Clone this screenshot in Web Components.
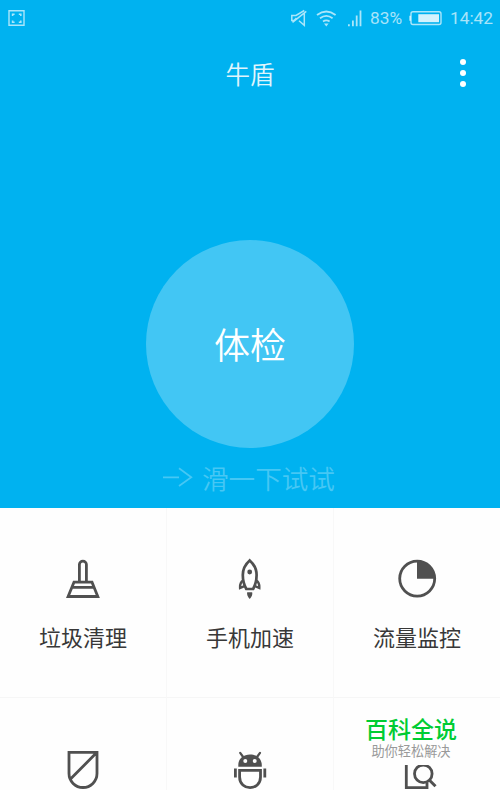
<!DOCTYPE html>
<html lang="zh-CN">
<head>
<meta charset="utf-8">
<title>牛盾</title>
<style>
html,body{margin:0;height:100%;overflow:hidden;background:#fefefe}
body{font-family:"Noto Sans CJK SC",sans-serif}
</style>
</head>
<body>
<shield-app></shield-app>
<script>
function define(name, html){
  const t=document.createElement('template');
  t.innerHTML=html;
  customElements.define(name,class extends HTMLElement{
    constructor(){super();this.attachShadow({mode:'open'}).append(t.content.cloneNode(true));}
  });
}

define('status-bar',`
<style>
:host{display:flex;align-items:center;height:35px;box-sizing:border-box;padding:0 8px 0 8px;color:rgba(255,255,255,.67);font:17.3px/36px Roboto,sans-serif}
svg{display:block;flex:none}
.gap{flex:1}
.pct{width:31px;white-space:nowrap;margin-right:8px}
.time{width:42px;white-space:nowrap}
</style>
<svg width="18" height="18" viewBox="8 8 18 18" fill="none" stroke="currentColor" stroke-width="1.4"><path d="M9 9.7H24V24.3H9Z"/><path stroke-width="1.6" d="M12.6 15V13.2H14.6M18.8 13.2H20.8V15M20.8 19.4V21.2H18.8M14.6 21.2H12.6V19.4"/></svg>
<span class="gap"></span>
<svg width="80" height="24" viewBox="290 5 80 24" fill="none" stroke="currentColor" stroke-width="1.5"><path d="M304.3 12V24.3L299 19.8M296.5 17L294 19.6H291.8V14.4H296L304.3 9.5M292.5 21.3L306.3 10.3"/>
<path stroke-width="1.8" d="M317 14Q326.3 7 335.6 14M320 17.3Q326.3 12.6 332.6 17.3M323 20.5Q326.3 18.2 329.6 20.5"/><path fill="currentColor" stroke="none" d="M324 22.6H328.6L326.3 25.4Z"/>
<path stroke-width="1.8" d="M348.9 23.3V25.2M352.9 19.6V25.2M356.7 14.5V25.2M360.5 9.4V25.2"/></svg>
<span class="pct">83%</span>
<svg width="41" height="24" viewBox="409 5 41 24"><rect x="411" y="10.7" width="30" height="12.8" rx="2" fill="none" stroke="currentColor" stroke-width="1.4"/><path d="M409.3 14.7H411V19.7H409.3Z" fill="currentColor"/><path d="M418.3 13.2H439V21.2H418.3Z" fill="#fff" opacity=".83"/></svg>
<span class="time">14:42</span>`);

define('title-bar',`
<style>
:host{display:grid;grid-template-columns:1fr auto 1fr;align-items:center;height:77px;color:#fff}
.t{grid-column:2;font-size:24.5px;font-weight:350;line-height:36px;opacity:.88}
.m{justify-self:end;margin-right:34px;display:grid;gap:5.2px;padding-bottom:1px}
i{display:block;width:6px;height:6px;border-radius:50%;background:#fff}
</style>
<span class="t"><slot></slot></span><span class="m"><i></i><i></i><i></i></span>`);

define('scan-button',`
<style>
:host{display:flex;align-items:center;justify-content:center;width:208px;height:208px;box-sizing:border-box;padding-bottom:2px;border-radius:50%;background:#42c6f4;color:#fff;font-size:36px;font-weight:350;line-height:52px}
</style><slot></slot>`);

define('swipe-hint',`
<style>
:host{display:flex;align-items:center;color:#46c7f4;font-size:26.6px;font-weight:350;line-height:38px}
svg{margin-right:9px}
</style>
<svg width="31" height="22" viewBox="162 467 31 22" fill="none" stroke="currentColor" stroke-width="1.7"><path d="M163 477.3H179M179 468.3L191.3 477.3L179 486"/></svg><slot></slot>`);

define('feature-tile',`
<style>
:host{display:flex;flex-direction:column;align-items:center;box-sizing:border-box;height:190px;padding-top:48px;border-right:1px solid #f8f8f8;border-bottom:1px solid #f6f6f6;color:#383838;font-size:22px;line-height:32px}
:host([last]){border-right:0}
::slotted(svg){display:block;width:44px;height:46px;margin-bottom:18px;fill:none;stroke:#505050;stroke-width:2.8;overflow:hidden}
</style>
<slot name="icon"></slot><span><slot></slot></span>`);

define('brand-mark',`
<style>
:host{display:flex;flex-direction:column;align-items:center;background:#fefefe;width:140px;height:65px;box-sizing:border-box;padding-top:11px}
b{color:#0c3;font-size:23px;line-height:34px;font-weight:500;height:34px;margin-bottom:-4px}
span{color:#999;font-size:13.2px;line-height:20px}
</style>
<b><slot></slot></b><span><slot name="sub"></slot></span>`);

define('shield-app',`
<style>
:host{display:block;width:500px;height:790px;overflow:hidden;position:relative;background:#fefefe}
header{background:#00b2f0;height:508px;display:flex;flex-direction:column}
scan-button{align-self:center;margin-top:128px}
swipe-hint{margin:11px 0 0 162px}
main{display:grid;grid-template-columns:167px 167px 166px}
brand-mark{position:absolute;left:341px;top:700px}
.solid{fill:#505050;stroke:none}
</style>
<header>
<status-bar></status-bar>
<title-bar>牛盾</title-bar>
<scan-button>体检</scan-button>
<swipe-hint>滑一下试试</swipe-hint>
</header>
<main>
<feature-tile><svg slot="icon" viewBox="61 556 44 46"><path d="M79.4 581V564.6A3.5 3.5 0 0 1 86.4 564.6V581M74 582.2H92L97.8 596.5H68.1ZM72.4 587.3H93.6"/></svg>垃圾清理</feature-tile>
<feature-tile><svg slot="icon" viewBox="228 556 44 46"><path stroke-width="2.7" d="M249.7 560.4C245 564.5 242.8 569.5 242.8 575C242.8 580.5 244.4 585.5 246.3 589H253.1C255 585.5 256.6 580.5 256.6 575C256.6 569.5 254.4 564.5 249.7 560.4Z"/><path stroke-width="2.4" d="M243 580.5Q239.8 582.5 240.1 588L245 585.8M256.4 580.5Q259.6 582.5 259.3 588L254.4 585.8"/><circle class="solid" cx="249.7" cy="572" r="2.4"/><path class="solid" d="M247.2 592.2H252.2Q253 595.3 249.7 599Q246.4 595.3 247.2 592.2Z"/></svg>手机加速</feature-tile>
<feature-tile last><svg slot="icon" viewBox="395 556 44 46"><circle cx="417.2" cy="578.6" r="17.5"/><path class="solid" d="M417 578.8V561H420L431 567L435 578.8Z"/></svg>流量监控</feature-tile>
<feature-tile><svg slot="icon" viewBox="61 746 44 46"><path d="M69 752.3H97V773.5A14 14 0 0 1 69 773.5ZM97 752.3L70.5 779"/></svg></feature-tile>
<feature-tile><svg slot="icon" viewBox="228 746 44 46"><path class="solid" fill-rule="evenodd" d="M238.3 766.7V765C238.3 758.5 243.5 754.4 250 754.4S261.8 758.5 261.8 765V766.7ZM243.3 761a2 2 0 1 0 4 0a2 2 0 1 0 -4 0ZM252.7 761a2 2 0 1 0 4 0a2 2 0 1 0 -4 0Z"/><path stroke-width="2.2" stroke-linecap="round" d="M240.2 752.8L242.8 756.5M260 752.8L257.4 756.5"/><path d="M239.6 770.3H260.5V777C260.5 791.2 239.6 791.2 239.6 777Z"/><path d="M235.4 768.4V777.6M264.8 768.4V777.6"/></svg></feature-tile>
<feature-tile last><svg slot="icon" viewBox="395 746 44 46"><path d="M406.3 757V787.7H427V782.5"/><circle cx="423.3" cy="773.8" r="8.8"/><path stroke-width="3" d="M429.5 780.3L435.5 786.2"/></svg></feature-tile>
</main>
<brand-mark>百科全说<span slot="sub">助你轻松解决</span></brand-mark>`);
</script>
</body>
</html>
